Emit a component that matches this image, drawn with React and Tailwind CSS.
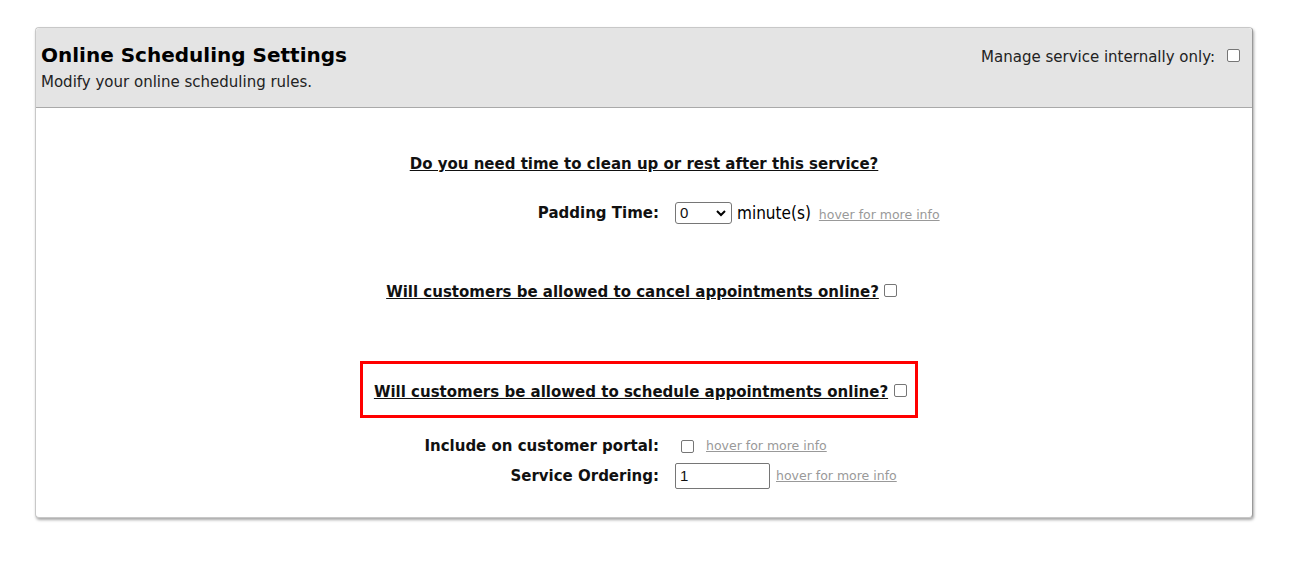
import React from 'react';

const font = { fontFamily: '"DejaVu Sans", Verdana, sans-serif' };
const arial = { fontFamily: '"Liberation Sans", Arial, sans-serif' };

const Hover = () => (
  <span className="text-[12.5px] leading-[16px] text-[#999] underline cursor-help">hover for more info</span>
);

const Box = () => (
  <span className="inline-block w-[13px] h-[13px] border border-[#767676] rounded-[2px] bg-white" />
);

const App = () => {
  return (
    <div className="min-h-screen bg-white pt-[27px] px-[35px]" style={font}>
      <div className="w-[1218px] border border-[#c8c8c8] border-r-[#999] rounded-[4px] shadow-[1px_2px_3px_rgba(0,0,0,0.35)] bg-white">

        {/* Header */}
        <div className="bg-[#e4e4e4] border-b border-[#a9a9a9] h-[80px] pl-[5px] pt-[14px] flex justify-between rounded-t-[4px]">
          <div>
            <h1 className="text-[20px] font-bold text-black leading-[26px]">Online Scheduling Settings</h1>
            <p className="text-[15px] text-[#222] leading-[18px] mt-[5px]">Modify your online scheduling rules.</p>
          </div>
          <div className="flex items-start gap-[12px] pr-[12px] pt-[6px]">
            <span className="text-[15px] text-[#222] leading-[18px]">Manage service internally only:</span>
            <span className="-mt-[3px]"><Box /></span>
          </div>
        </div>

        {/* Body */}
        <div className="flex flex-col items-center pt-[47px] pb-[28px] text-[15px] text-[#111]">
          <p className="font-bold underline leading-[18px]">Do you need time to clean up or rest after this service?</p>

          <div className="grid grid-cols-[623px_1fr] w-full mt-[27px] items-center">
            <span className="font-bold text-right leading-[18px]">Padding Time:</span>
            <div className="flex items-center pl-[16px]">
              <div className="w-[57px] h-[22px] border border-[#767676] rounded-[3px] flex items-center justify-between px-[4px] bg-white">
                <span className="text-[15px]" style={arial}>0</span>
                <svg width="12" height="12" viewBox="0 0 12 12"><path d="M2 4l4 4 4-4" fill="none" stroke="#000" strokeWidth="2" /></svg>
              </div>
              <span className="ml-[5px] text-[17px] leading-[20px] text-black" style={{ fontFamily: '"DejaVu Sans Condensed", "DejaVu Sans", sans-serif' }}>minute(s)</span>
              <span className="ml-[8px] mt-[3px]"><Hover /></span>
            </div>
          </div>

          <div className="flex items-start gap-[5px] mt-[57px] pr-[5px]">
            <p className="font-bold underline leading-[18px]">Will customers be allowed to cancel appointments online?</p>
            <span className="-mt-[2px]"><Box /></span>
          </div>

          <div className="mt-[58px] mr-[10px] border-[3px] border-[#f00] w-[558px] h-[57px] flex justify-center items-start pt-[19px] pl-[3px]">
            <div className="flex items-start gap-[6px]">
              <p className="font-bold underline leading-[18px]">Will customers be allowed to schedule appointments online?</p>
              <span className="-mt-[2px]"><Box /></span>
            </div>
          </div>

          <div className="grid grid-cols-[623px_1fr] w-full mt-[15px] items-center gap-y-[4px]">
            <span className="font-bold text-right leading-[18px]">Include on customer portal:</span>
            <div className="flex items-center pl-[22px] h-[26px] gap-[12px]">
              <Box />
              <Hover />
            </div>
            <span className="font-bold text-right leading-[18px]">Service Ordering:</span>
            <div className="flex items-center pl-[16px] gap-[6px]">
              <div className="w-[95px] h-[26px] border border-[#767676] rounded-[2px] flex items-center px-[4px] bg-white">
                <span className="text-[15px]" style={arial}>1</span>
              </div>
              <Hover />
            </div>
          </div>
        </div>
      </div>
    </div>
  );
};

export default App;
